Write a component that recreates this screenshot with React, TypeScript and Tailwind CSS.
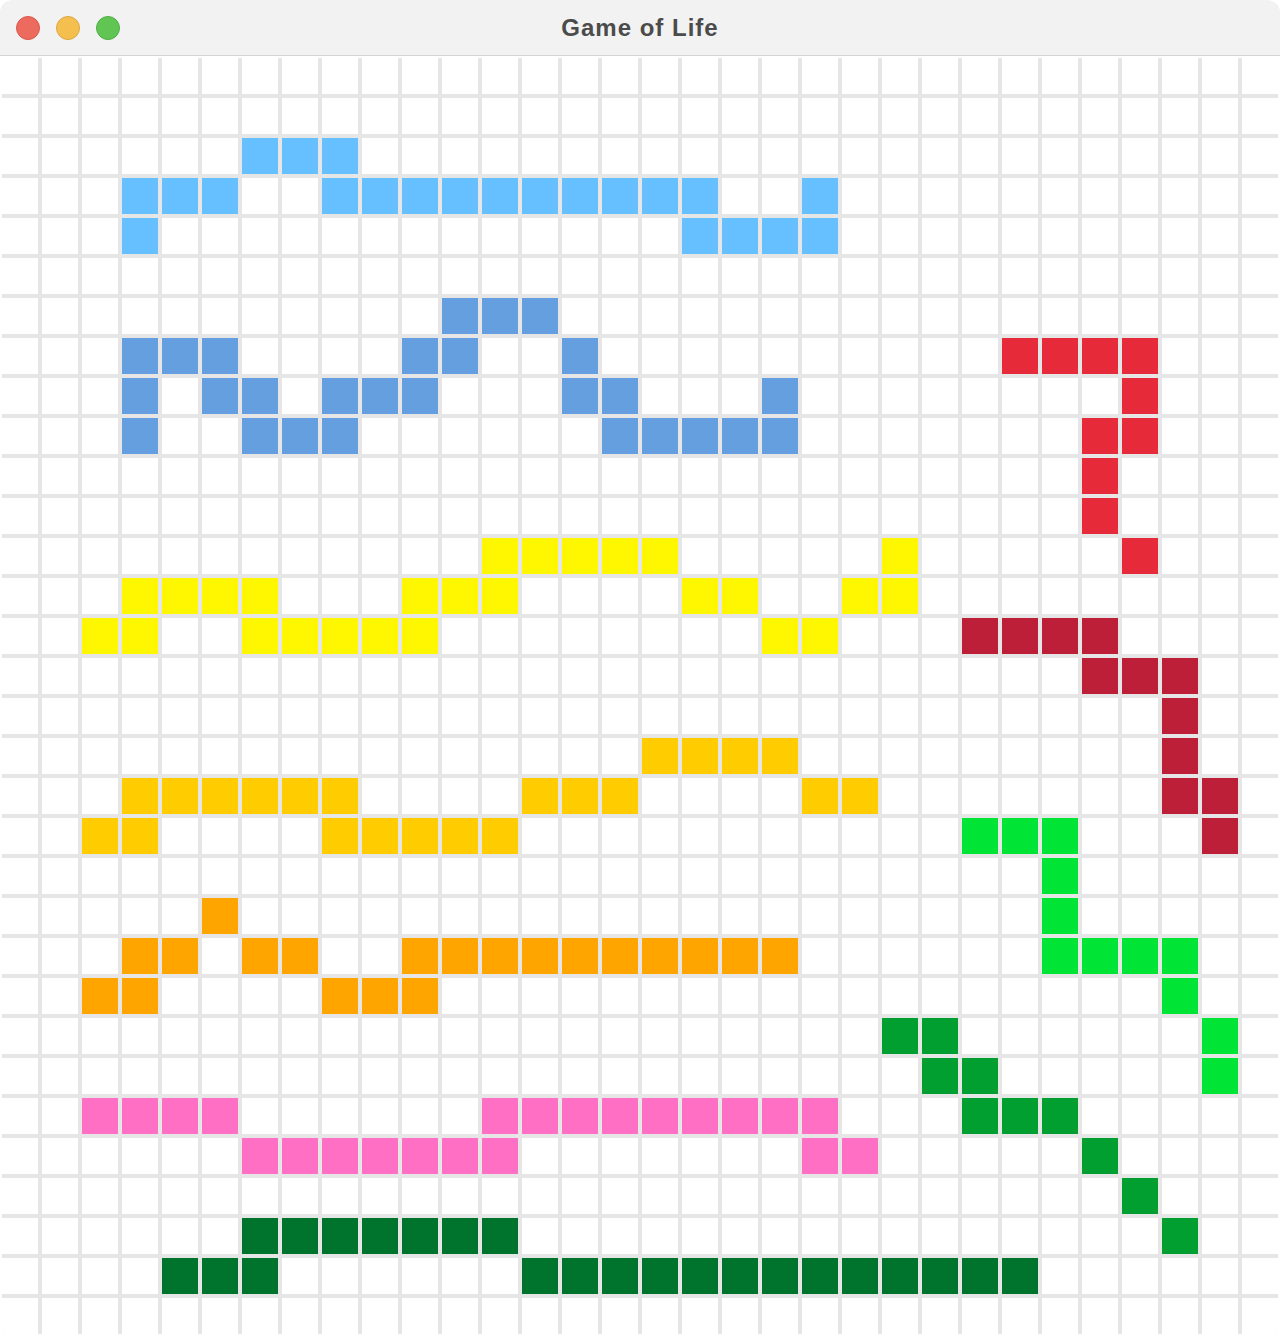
import React from "react";

type Run = { color: string; cols: number[] };

const range = (a: number, b: number) => {
  const out: number[] = [];
  for (let i = a; i <= b; i++) out.push(i);
  return out;
};

// colour name -> tailwind class
const palette: Record<string, string> = {
  sky: "bg-[#66bfff]",
  steel: "bg-[#669fdf]",
  red: "bg-[#e62a39]",
  yellow: "bg-[#fff700]",
  crimson: "bg-[#bd1f38]",
  amber: "bg-[#ffcc00]",
  orange: "bg-[#ffa500]",
  lime: "bg-[#00e436]",
  green: "bg-[#009f2f]",
  forest: "bg-[#00732d]",
  pink: "bg-[#ff70c4]",
};

const live: Record<number, Run[]> = {
  2: [{ color: "sky", cols: [6, 7, 8] }],
  3: [{ color: "sky", cols: [3, 4, 5, ...range(8, 17), 20] }],
  4: [{ color: "sky", cols: [3, 17, 18, 19, 20] }],
  6: [{ color: "steel", cols: [11, 12, 13] }],
  7: [
    { color: "steel", cols: [3, 4, 5, 10, 11, 14] },
    { color: "red", cols: [25, 26, 27, 28] },
  ],
  8: [
    { color: "steel", cols: [3, 5, 6, 8, 9, 10, 14, 15, 19] },
    { color: "red", cols: [28] },
  ],
  9: [
    { color: "steel", cols: [3, 6, 7, 8, ...range(15, 19)] },
    { color: "red", cols: [27, 28] },
  ],
  10: [{ color: "red", cols: [27] }],
  11: [{ color: "red", cols: [27] }],
  12: [
    { color: "yellow", cols: [...range(12, 16), 22] },
    { color: "red", cols: [28] },
  ],
  13: [{ color: "yellow", cols: [3, 4, 5, 6, 10, 11, 12, 17, 18, 21, 22] }],
  14: [
    { color: "yellow", cols: [2, 3, ...range(6, 10), 19, 20] },
    { color: "crimson", cols: [24, 25, 26, 27] },
  ],
  15: [{ color: "crimson", cols: [27, 28, 29] }],
  16: [{ color: "crimson", cols: [29] }],
  17: [
    { color: "amber", cols: [16, 17, 18, 19] },
    { color: "crimson", cols: [29] },
  ],
  18: [
    { color: "amber", cols: [...range(3, 8), 13, 14, 15, 20, 21] },
    { color: "crimson", cols: [29, 30] },
  ],
  19: [
    { color: "amber", cols: [2, 3, ...range(8, 12)] },
    { color: "lime", cols: [24, 25, 26] },
    { color: "crimson", cols: [30] },
  ],
  20: [{ color: "lime", cols: [26] }],
  21: [
    { color: "orange", cols: [5] },
    { color: "lime", cols: [26] },
  ],
  22: [
    { color: "orange", cols: [3, 4, 6, 7, ...range(10, 19)] },
    { color: "lime", cols: [26, 27, 28, 29] },
  ],
  23: [
    { color: "orange", cols: [2, 3, 8, 9, 10] },
    { color: "lime", cols: [29] },
  ],
  24: [
    { color: "green", cols: [22, 23] },
    { color: "lime", cols: [30] },
  ],
  25: [
    { color: "green", cols: [23, 24] },
    { color: "lime", cols: [30] },
  ],
  26: [
    { color: "pink", cols: [2, 3, 4, 5, ...range(12, 20)] },
    { color: "green", cols: [24, 25, 26] },
  ],
  27: [
    { color: "pink", cols: [...range(6, 12), 20, 21] },
    { color: "green", cols: [27] },
  ],
  28: [{ color: "green", cols: [28] }],
  29: [
    { color: "forest", cols: range(6, 12) },
    { color: "green", cols: [29] },
  ],
  30: [{ color: "forest", cols: [4, 5, 6, ...range(13, 25)] }],
};

const SIZE = 32;

function cellClass(r: number, c: number) {
  const runs = live[r] || [];
  for (const run of runs) {
    if (run.cols.includes(c)) return palette[run.color];
  }
  return "bg-white";
}

function TitleBar() {
  return (
    <div className="relative h-[56px] flex items-center bg-[#f2f2f2] border-b border-[#d4d4d4] rounded-t-[12px]">
      <div className="flex items-center gap-[16px] pl-[16px]">
        <span className="w-[24px] h-[24px] rounded-full bg-[#ed6a5e] border border-[#d9574c]" />
        <span className="w-[24px] h-[24px] rounded-full bg-[#f5bf4f] border border-[#dba83f]" />
        <span className="w-[24px] h-[24px] rounded-full bg-[#61c554] border border-[#51ac45]" />
      </div>
      <div className="absolute inset-0 flex items-center justify-center pointer-events-none">
        <span className="font-['Liberation_Sans',Arial,sans-serif] font-bold text-[24px] text-[#4b4b4b] tracking-[1px]">
          Game of Life
        </span>
      </div>
    </div>
  );
}

export default function App() {
  return (
    <div className="w-[1280px] h-[1336px] bg-white">
      <div className="w-full h-full rounded-[12px] overflow-hidden bg-white flex flex-col">
        <TitleBar />
        <div className="p-[2px] bg-white">
          <div className="grid grid-cols-[repeat(32,36px)] grid-rows-[repeat(32,36px)] gap-[4px] bg-[#e6e6e6]">
            {range(0, SIZE - 1).map((r) =>
              range(0, SIZE - 1).map((c) => (
                <div key={`${r}-${c}`} className={cellClass(r, c)} />
              ))
            )}
          </div>
        </div>
      </div>
    </div>
  );
}
